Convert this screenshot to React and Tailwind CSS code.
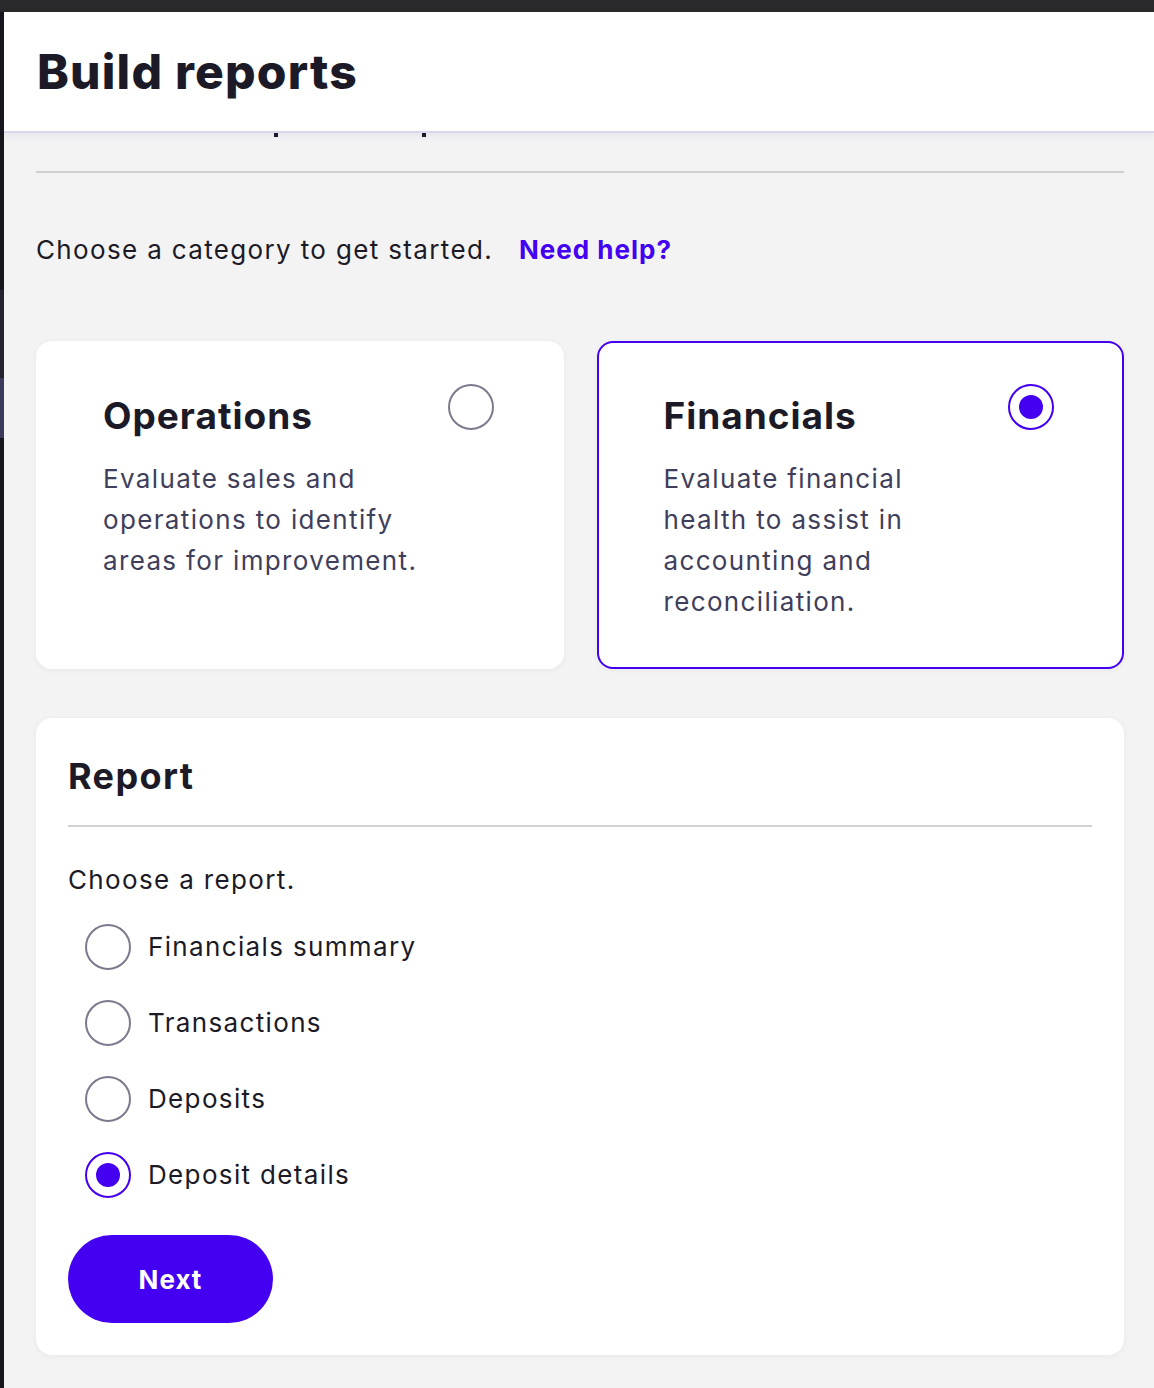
import { useState } from 'react'

const CATEGORIES = [
  {
    key: 'operations',
    title: 'Operations',
    lines: ['Evaluate sales and', 'operations to identify', 'areas for improvement.'],
  },
  {
    key: 'financials',
    title: 'Financials',
    lines: ['Evaluate financial', 'health to assist in', 'accounting and', 'reconciliation.'],
  },
]

const REPORTS = ['Financials summary', 'Transactions', 'Deposits', 'Deposit details']

function Radio({ checked }) {
  return (
    <span
      className={`w-[46px] h-[46px] shrink-0 rounded-full border-2 flex items-center justify-center bg-white ${
        checked ? 'border-[#4400f0]' : 'border-[#7c7b8e]'
      }`}
    >
      {checked && <span className="w-[24px] h-[24px] rounded-full bg-[#4400f0]" />}
    </span>
  )
}

export default function App() {
  const [category, setCategory] = useState('financials')
  const [report, setReport] = useState('Deposit details')

  return (
    <div className="min-h-screen bg-[#2a2a2c] pt-[12px] flex font-['Inter',sans-serif] text-[#1b1a26] tracking-[1.35px]">
      {/* left edge of the window behind */}
      <div className="w-[4px] shrink-0 flex flex-col bg-[#17161d]">
        <div className="h-[278px]" />
        <div className="h-[88px] bg-[#24232f]" />
        <div className="h-[60px] bg-[#3b3a5a]" />
      </div>

      <div className="flex-1 bg-[#f3f3f4] flex flex-col">
        {/* Header */}
        <div className="h-[121px] bg-white border-b-2 border-[#dad7ec] shadow-[0_3px_8px_rgba(70,60,140,0.07)] flex items-center pl-[33px] relative z-10">
          <h1 className="text-[48px] font-extrabold tracking-[1.2px] leading-none">Build reports</h1>
        </div>

        <div className="pl-[32px] pr-[30px] flex flex-col">
          {/* clipped descenders of the scrolled title */}
          <div className="h-[4px] relative">
            <span className="absolute left-[238px] top-0 w-[4px] h-[4px] bg-[#1b1a26]" />
            <span className="absolute left-[386px] top-0 w-[4px] h-[4px] bg-[#1b1a26]" />
          </div>

          <div className="mt-[34px] h-[2px] bg-[#cfcfd1]" />

          <p className="mt-[57px] text-[26px] leading-[40px] flex items-center">
            Choose a category to get started.
            <a href="#" className="ml-[26px] font-bold tracking-[1px] text-[#4400f0]">Need help?</a>
          </p>

          {/* Category cards */}
          <div className="mt-[71px] grid grid-cols-2 gap-[33px]">
            {CATEGORIES.map((c) => {
              const checked = category === c.key
              return (
                <button
                  key={c.key}
                  onClick={() => setCategory(c.key)}
                  className={`h-[328px] text-left rounded-[16px] bg-white shadow-[0_1px_6px_rgba(0,0,0,0.05)] flex items-start justify-between pt-[41px] pl-[65px] pr-[68px] border-2 ${
                    checked ? 'border-[#4400f0]' : 'border-white'
                  }`}
                >
                  <div className="pt-[8px]">
                    <h2 className="text-[37px] font-bold leading-[48px] tracking-[1px]">{c.title}</h2>
                    <p className="mt-[18px] text-[26px] leading-[41px] text-[#3f3e5b]">
                      {c.lines.map((l) => (
                        <span key={l} className="block">{l}</span>
                      ))}
                    </p>
                  </div>
                  <Radio checked={checked} />
                </button>
              )
            })}
          </div>

          {/* Report picker */}
          <div className="mt-[49px] rounded-[16px] bg-white shadow-[0_1px_6px_rgba(0,0,0,0.05)] px-[32px] pt-[36px] pb-[32px]">
            <h2 className="text-[36px] font-bold leading-[44px] tracking-[1.4px]">Report</h2>
            <div className="mt-[27px] h-[2px] bg-[#d2d2d4]" />
            <p className="mt-[33px] text-[26px] leading-[40px]">Choose a report.</p>

            <div className="mt-[24px] pl-[17px] flex flex-col gap-[30px]">
              {REPORTS.map((r) => (
                <label key={r} onClick={() => setReport(r)} className="flex items-center gap-[17px] cursor-pointer">
                  <Radio checked={report === r} />
                  <span className="text-[26px] leading-[40px]">{r}</span>
                </label>
              ))}
            </div>

            <button className="mt-[37px] w-[205px] h-[88px] rounded-full bg-[#4400f0] text-white text-[26px] font-bold tracking-[1px]">
              Next
            </button>
          </div>

          <div className="h-[33px]" />
        </div>
      </div>
    </div>
  )
}
